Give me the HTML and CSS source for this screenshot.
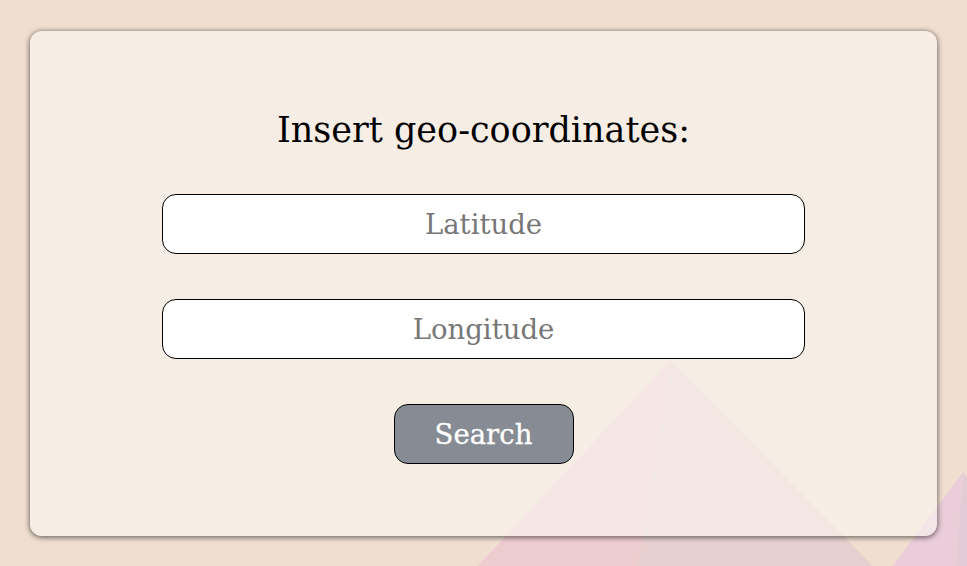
FILE: index.html
```html
<!DOCTYPE html>
<html lang="en">
<head>
<meta charset="utf-8">
<title>Geo search</title>
<link rel="stylesheet" href="styles.css">
</head>
<body>
<svg class="bg-shapes" width="967" height="566" viewBox="0 0 967 566" aria-hidden="true">
  <polygon points="671,360 440,606 632,606" fill="#eecdd1"/>
  <polygon points="671,360 632,606 912,606" fill="#e8cfd0"/>
  <polygon points="963,472 840,636 950,636" fill="#ebcdd9"/>
  <polygon points="963,472 950,636 1100,636" fill="#e4ccd6"/>
</svg>
<main class="card">
  <h1 class="title">Insert geo-coordinates:</h1>
  <form class="form">
    <input class="field" type="text" placeholder="Latitude">
    <input class="field" type="text" placeholder="Longitude">
    <button class="btn" type="button">Search</button>
  </form>
</main>
</body>
</html>
```
FILE: styles.css
```css
html, body {
  margin: 0;
  padding: 0;
}
body {
  width: 967px;
  height: 566px;
  overflow: hidden;
  background: #f0dfd0;
  font-family: "DejaVu Serif", "Liberation Serif", serif;
  position: relative;
}
.bg-shapes {
  position: absolute;
  left: 0;
  top: 0;
  z-index: 0;
}
.card {
  position: relative;
  z-index: 1;
  box-sizing: border-box;
  margin: 31px 30px 0 30px;
  width: 907px;
  height: 505px;
  border-radius: 12px;
  background: rgba(250, 245, 240, 0.62);
  box-shadow: 0 1px 5px 1px rgba(0, 0, 0, 0.5);
  display: flex;
  flex-direction: column;
  align-items: center;
  padding-top: 77px;
}
.title {
  margin: 0;
  font-weight: normal;
  font-size: 35px;
  line-height: 44px;
  color: #000;
}
.form {
  margin-top: 42px;
  display: flex;
  flex-direction: column;
  align-items: center;
  gap: 45px;
}
.field {
  box-sizing: border-box;
  width: 643px;
  height: 60px;
  border: 1px solid #000;
  border-radius: 14px;
  background: #fff;
  font-family: inherit;
  font-size: 27.5px;
  text-align: center;
  outline: none;
  padding: 0;
}
.field::placeholder {
  color: #777;
}
.btn {
  box-sizing: border-box;
  width: 180px;
  height: 60px;
  border: 1px solid #000;
  border-radius: 14px;
  background: #878c94;
  color: #fff;
  font-family: inherit;
  font-size: 27.5px;
  padding: 0;
  -webkit-text-stroke: 0.3px #fff;
}
```
